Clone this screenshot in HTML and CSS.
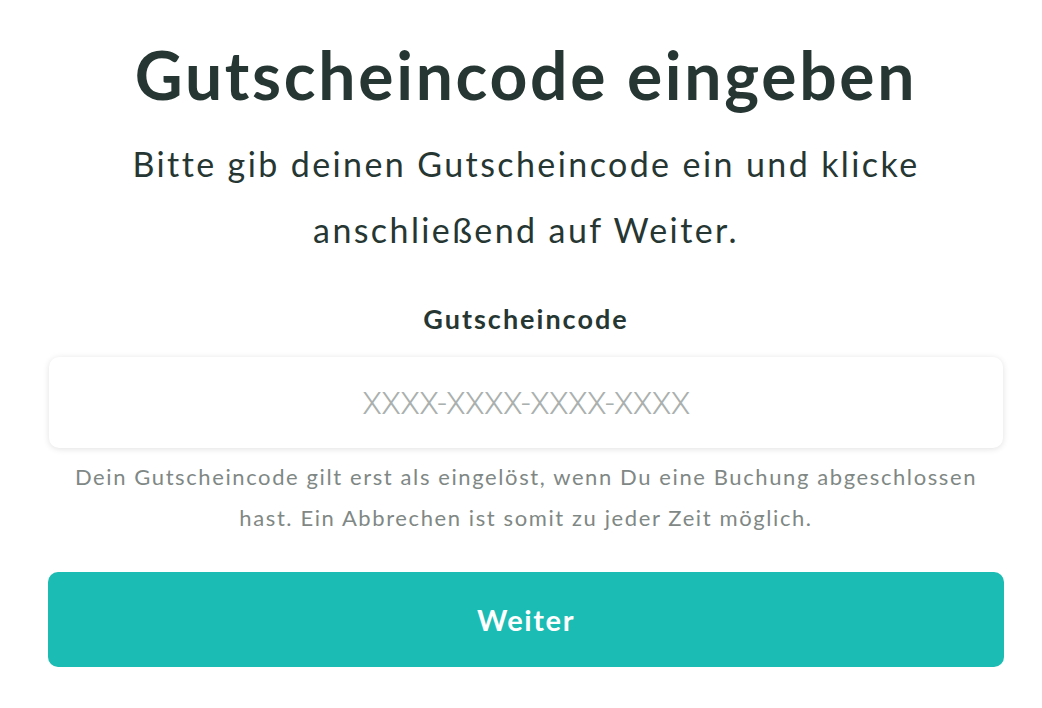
FILE: index.html
```html
<!DOCTYPE html>
<html lang="de">
<head>
    <meta charset="UTF-8">
    <meta name="viewport" content="width=device-width, initial-scale=1.0">
    <title>Gutscheincode eingeben</title>
    <link rel="stylesheet" href="styles.css">
</head>
<body>
    <form class="voucher-form" id="voucherForm">
        <h1 class="title">Gutscheincode eingeben</h1>
        <p class="intro">Bitte gib deinen Gutscheincode ein und klicke anschließend auf Weiter.</p>
        <label class="code-label" for="code">Gutscheincode</label>
        <input class="code-input" type="text" id="code" name="code" placeholder="XXXX-XXXX-XXXX-XXXX">
        <p class="hint">Dein Gutscheincode gilt erst als eingelöst, wenn Du eine Buchung abgeschlossen hast. Ein Abbrechen ist somit zu jeder Zeit möglich.</p>
        <button type="submit" class="submit-button">Weiter</button>
    </form>
</body>
</html>
```

FILE: styles.css
```css
body {
    font-family: Lato, "Open Sans", sans-serif;
    background-color: #fff;
    color: #263733;
    margin: 0;
    padding: 0;
}

.voucher-form {
    width: 956px;
    margin-left: 48px;
    display: flex;
    flex-direction: column;
    align-items: center;
    text-align: center;
}

.title {
    font-size: 66px;
    font-weight: 700;
    line-height: 80px;
    margin: 35px 0 0 0;
    letter-spacing: 2.7px;
}

.intro {
    font-size: 34px;
    font-weight: 400;
    line-height: 66px;
    letter-spacing: 2.4px;
    width: 800px;
    margin: 16px 0 0 0;
}

.code-label {
    font-size: 27px;
    font-weight: 700;
    line-height: 40px;
    letter-spacing: 2px;
    margin-top: 36px;
}

.code-input {
    box-sizing: border-box;
    width: 954px;
    height: 91px;
    margin-top: 18px;
    border: none;
    border-radius: 10px;
    box-shadow: 0 1px 6px rgba(0, 0, 0, 0.12);
    font-family: Roboto, sans-serif;
    font-weight: 300;
    font-size: 32px;
    letter-spacing: -0.6px;
    text-align: center;
    color: #263733;
    outline: none;
}
.code-input::placeholder {
    color: #aab0ae;
}

.hint {
    font-size: 22px;
    line-height: 41px;
    letter-spacing: 1.6px;
    color: #7f8885;
    margin: 8px 0 0 0;
    width: 930px;
}

.submit-button {
    width: 956px;
    height: 95px;
    margin-top: 34px;
    background-color: #1bbcb3;
    color: #fff;
    border: none;
    border-radius: 10px;
    font-family: Lato, sans-serif;
    font-size: 29px;
    font-weight: 700;
    letter-spacing: 1.6px;
    cursor: pointer;
}
```
